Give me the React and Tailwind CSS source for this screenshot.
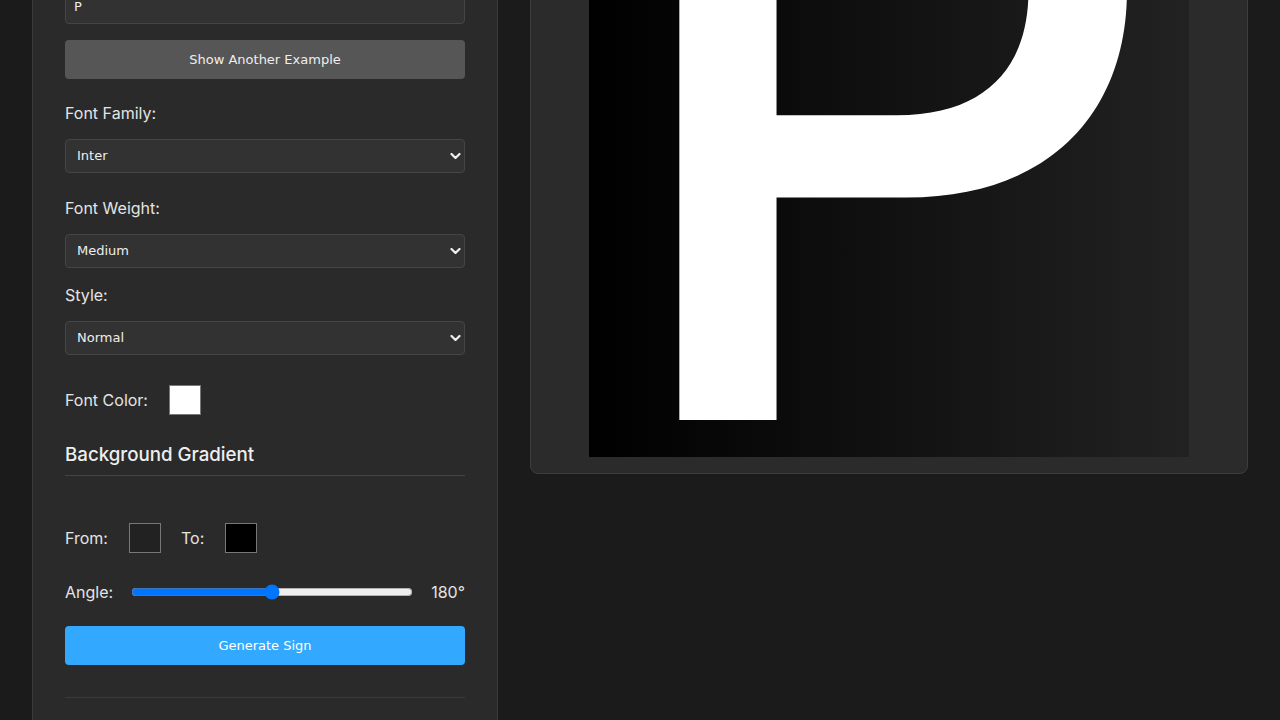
import React from "react";

function Chevron() {
  return (
    <svg
      className="pointer-events-none absolute right-[4px] top-1/2 -translate-y-1/2"
      width="11"
      height="7"
      viewBox="0 0 11 7"
      fill="none"
    >
      <polyline points="1.5,1.5 5.5,5.5 9.5,1.5" stroke="#f0f0f0" strokeWidth="2.2" strokeLinecap="round" strokeLinejoin="round" />
    </svg>
  );
}

function SelectBox({ value, options }) {
  return (
    <div className="relative">
      <select
        defaultValue={value}
        className="block h-[34px] w-full appearance-none rounded-[4px] border border-[#454545] bg-[#323232] pl-[11px] pr-6 font-['DejaVu_Sans',sans-serif] text-[13px] text-[#eeeeee] outline-none"
      >
        {options.map((o) => (
          <option key={o}>{o}</option>
        ))}
      </select>
      <Chevron />
    </div>
  );
}

function Swatch({ color }) {
  return <div className="h-[30px] w-[32px] shrink-0 border border-[#777777]" style={{ backgroundColor: color }} />;
}

export default function App() {
  return (
    <div className="h-screen overflow-hidden bg-[#1b1b1b]">
      <div className="-mt-[192px] flex pl-8 font-['Inter',sans-serif] text-[#e4e4e4]">
        <aside className="w-[466px] shrink-0 border-x border-[#3a3a3a] bg-[#2a2a2a] px-8 pt-8 pb-24">
          <h2 className="mb-[79px] text-2xl font-semibold leading-8 text-white">Sign Generator</h2>
          <label className="block text-base leading-6">Text:</label>
          <input
            defaultValue="P"
            className="mt-[14px] block h-[35px] w-full rounded-[4px] border border-[#454545] bg-[#323232] px-2 font-['DejaVu_Sans',sans-serif] text-[13px] text-[#eeeeee] outline-none"
          />
          <button className="mt-4 block h-[39px] w-full rounded-[4px] bg-[#565656] font-['DejaVu_Sans',sans-serif] text-[13px] text-[#eeeeee]">
            Show Another Example
          </button>

          <label className="mt-[22px] block text-base leading-6">Font Family:</label>
          <div className="mt-[14px]">
            <SelectBox value="Inter" options={["Inter", "Roboto", "Lato", "Open Sans", "Noto Sans"]} />
          </div>

          <label className="mt-[23px] block text-base leading-6">Font Weight:</label>
          <div className="mt-[14px]">
            <SelectBox value="Medium" options={["Regular", "Medium", "Semi Bold", "Bold"]} />
          </div>

          <label className="mt-[15px] block text-base leading-6">Style:</label>
          <div className="mt-[14px]">
            <SelectBox value="Normal" options={["Normal", "Italic"]} />
          </div>

          <div className="mt-[30px] flex items-center">
            <span className="mr-[21px] text-base leading-6">Font Color:</span>
            <Swatch color="#ffffff" />
          </div>

          <h3 className="mt-[26px] border-b border-[#444444] pb-[6px] text-[18.72px] leading-7 font-medium text-[#eeeeee]">
            Background Gradient
          </h3>

          <div className="mt-[47px] flex items-center">
            <span className="mr-[21px] text-base leading-6">From:</span>
            <Swatch color="#222222" />
            <span className="ml-5 mr-[21px] text-base leading-6">To:</span>
            <Swatch color="#000000" />
          </div>

          <div className="mt-[27px] flex h-6 items-center gap-[18px]">
            <span className="text-base leading-6">Angle:</span>
            <input type="range" min="0" max="360" defaultValue="180" className="m-0 min-w-0 flex-1" />
            <span className="text-base leading-6">180°</span>
          </div>

          <button className="mt-[22px] block h-[39px] w-full rounded-[4px] bg-[#33a8ff] font-['DejaVu_Sans',sans-serif] text-[13px] text-white">
            Generate Sign
          </button>

          <div className="mt-8 border-t border-[#3a3a3a]" />
        </aside>

        <main className="min-w-0 flex-1 p-8">
          <div className="flex justify-center rounded-lg border border-[#3d3d3d] bg-[#2b2b2b] p-4">
            <div className="relative h-[600px] w-[600px] shrink-0 overflow-hidden bg-[linear-gradient(to_right,#000000,#222222)]">
              <span className="absolute left-[20px] top-[-191px] whitespace-nowrap font-['Inter',sans-serif] text-[873px] leading-none font-medium text-white">
                P
              </span>
            </div>
          </div>
        </main>
      </div>
    </div>
  );
}
